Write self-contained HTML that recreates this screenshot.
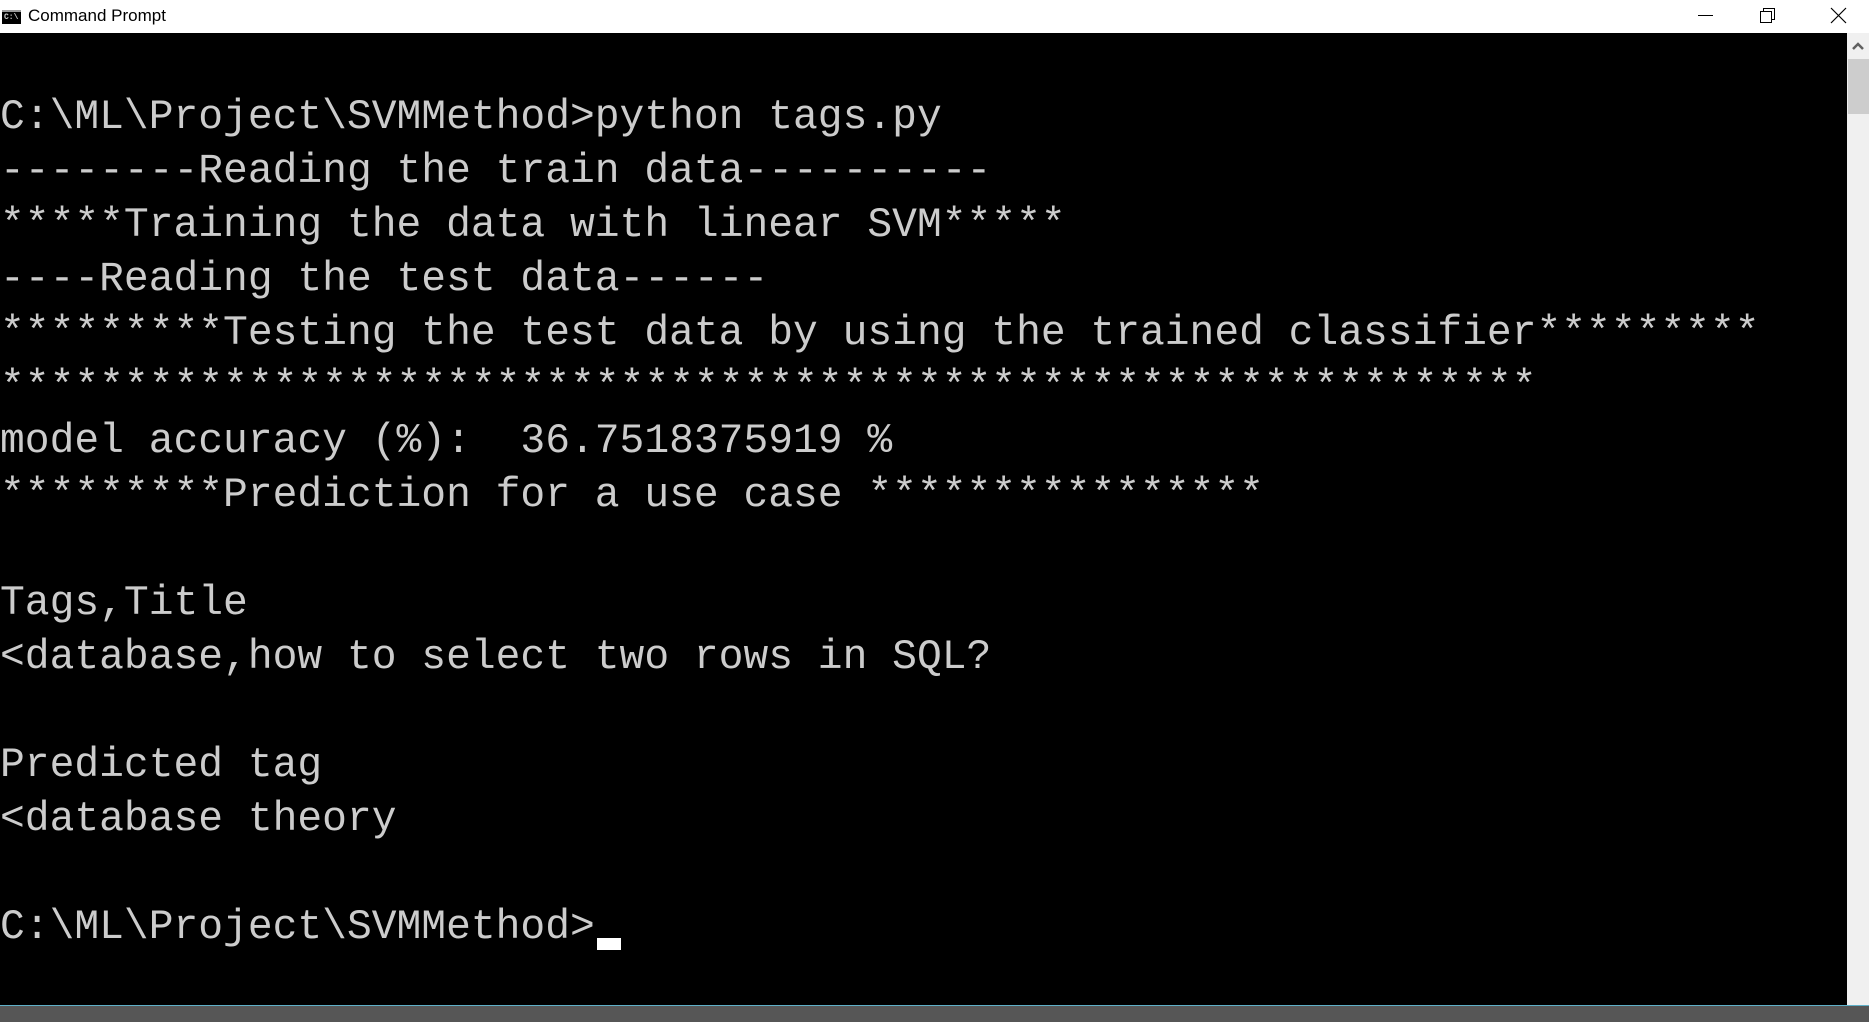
<!DOCTYPE html>
<html><head><meta charset="utf-8"><style>
html,body{margin:0;padding:0;width:1869px;height:1021px;overflow:hidden;background:#000;}
#title{position:absolute;left:0;top:0;width:1869px;height:33px;background:#fff;}
#title .t{position:absolute;left:28px;top:6px;font:17px "Liberation Sans",sans-serif;color:#000;}
#icon{position:absolute;left:2px;top:10px;width:19px;height:14px;background:#000;border-top:2px solid #9a9a9a;box-sizing:border-box;}
#icon span{position:absolute;left:2px;top:1px;color:#ccc;font:bold 8px "Liberation Mono",monospace;}
#term{position:absolute;left:0;top:33px;width:1847px;height:972px;background:#000;}
pre{margin:0;position:absolute;left:0;top:91px;font-family:"Liberation Mono",monospace;font-size:41.3px;line-height:54px;color:#cccccc;}
#cursor{position:absolute;left:597px;top:938px;width:24px;height:12px;background:#fff;}
#sb{position:absolute;left:1847px;top:33px;width:22px;height:972px;background:#f0f0f0;}
#thumb{position:absolute;left:1px;top:26px;width:21px;height:55px;background:#cdcdcd;}
#bot{position:absolute;left:0;top:1005px;width:1869px;height:16px;background:#565656;border-top:1px solid #5fb0c8;}
</style></head><body>
<div id="title"><div id="icon"><span>C:\</span></div><div class="t">Command Prompt</div>
<svg style="position:absolute;left:1680px;top:0" width="189" height="33">
<line x1="18" y1="15.5" x2="33" y2="15.5" stroke="#000" stroke-width="1"/>
<rect x="80.5" y="11.5" width="11" height="11" fill="#fff" stroke="#000"/>
<path d="M83.5 11.5V8.5H94.5V19.5H91.5" fill="none" stroke="#000"/>
<path d="M151 8L166 23M166 8L151 23" stroke="#000" stroke-width="1.2"/>
</svg></div>
<div id="term"></div>
<pre>C:\ML\Project\SVMMethod&gt;python tags.py
--------Reading the train data----------
*****Training the data with linear SVM*****
----Reading the test data------
*********Testing the test data by using the trained classifier*********
**************************************************************
model accuracy (%):  36.7518375919 %
*********Prediction for a use case ****************

Tags,Title
&lt;database,how to select two rows in SQL?

Predicted tag
&lt;database theory

C:\ML\Project\SVMMethod&gt;</pre>
<div id="cursor"></div>
<div id="sb"><svg width="22" height="26"><path d="M6 16L11 11L16 16" fill="none" stroke="#606060" stroke-width="2.5"/></svg><div id="thumb"></div></div>
<div id="bot"></div>
</body></html>
